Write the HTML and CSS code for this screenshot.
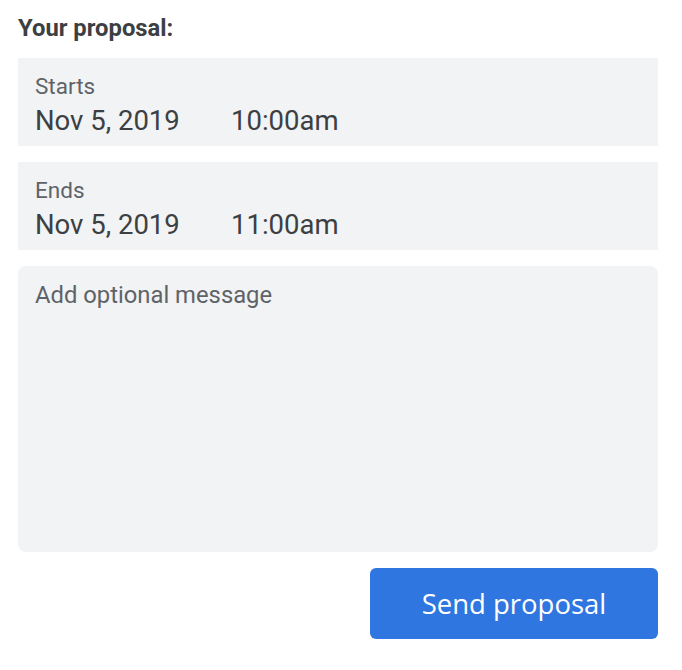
FILE: index.html
```html
<!DOCTYPE html>
<html lang="en">
<head>
<meta charset="utf-8">
<title>Your proposal</title>
<link rel="stylesheet" href="styles.css">
</head>
<body>
<div class="panel">
  <h2 class="title">Your proposal:</h2>
  <div class="field">
    <div class="label">Starts</div>
    <div class="value"><span class="date">Nov 5, 2019</span><span class="time">10:00am</span></div>
  </div>
  <div class="field">
    <div class="label">Ends</div>
    <div class="value"><span class="date">Nov 5, 2019</span><span class="time">11:00am</span></div>
  </div>
  <div class="message">Add optional message</div>
  <div class="actions">
    <button class="send">Send proposal</button>
  </div>
</div>
</body>
</html>
```
FILE: styles.css
```css
html, body {
  margin: 0;
  padding: 0;
  background: #ffffff;
}
.panel {
  padding: 14px 24px 0 18px;
  display: flex;
  flex-direction: column;
  font-family: Roboto, "Liberation Sans", sans-serif;
}
.title {
  margin: 0;
  font-size: 23.8px;
  font-weight: 700;
  color: #3c4043;
  line-height: 28px;
}
.field {
  margin-top: 16px;
  background: #f1f3f4;
  height: 88px;
  box-sizing: border-box;
  padding: 14px 17px 0;
}
.field + .field {
  margin-top: 16px;
}
.label {
  font-size: 22.5px;
  line-height: 28px;
  color: #5f6368;
}
.value {
  margin-top: 2px;
  font-size: 27.5px;
  line-height: 38px;
  color: #3c4043;
  display: flex;
}
.date {
  width: 196px;
}
.message {
  margin-top: 16px;
  height: 286px;
  background: #f1f3f4;
  border-radius: 8px;
  box-sizing: border-box;
  padding: 14px 17px;
  font-size: 23.8px;
  line-height: 30px;
  color: #5f6368;
}
.actions {
  margin-top: 16px;
  display: flex;
  justify-content: flex-end;
}
.send {
  width: 288px;
  height: 71px;
  border: none;
  border-radius: 6px;
  background: #2f76e0;
  color: #ffffff;
  font-family: "Open Sans", Roboto, sans-serif;
  font-size: 27.5px;
  font-weight: 500;
  padding: 0;
}
```
